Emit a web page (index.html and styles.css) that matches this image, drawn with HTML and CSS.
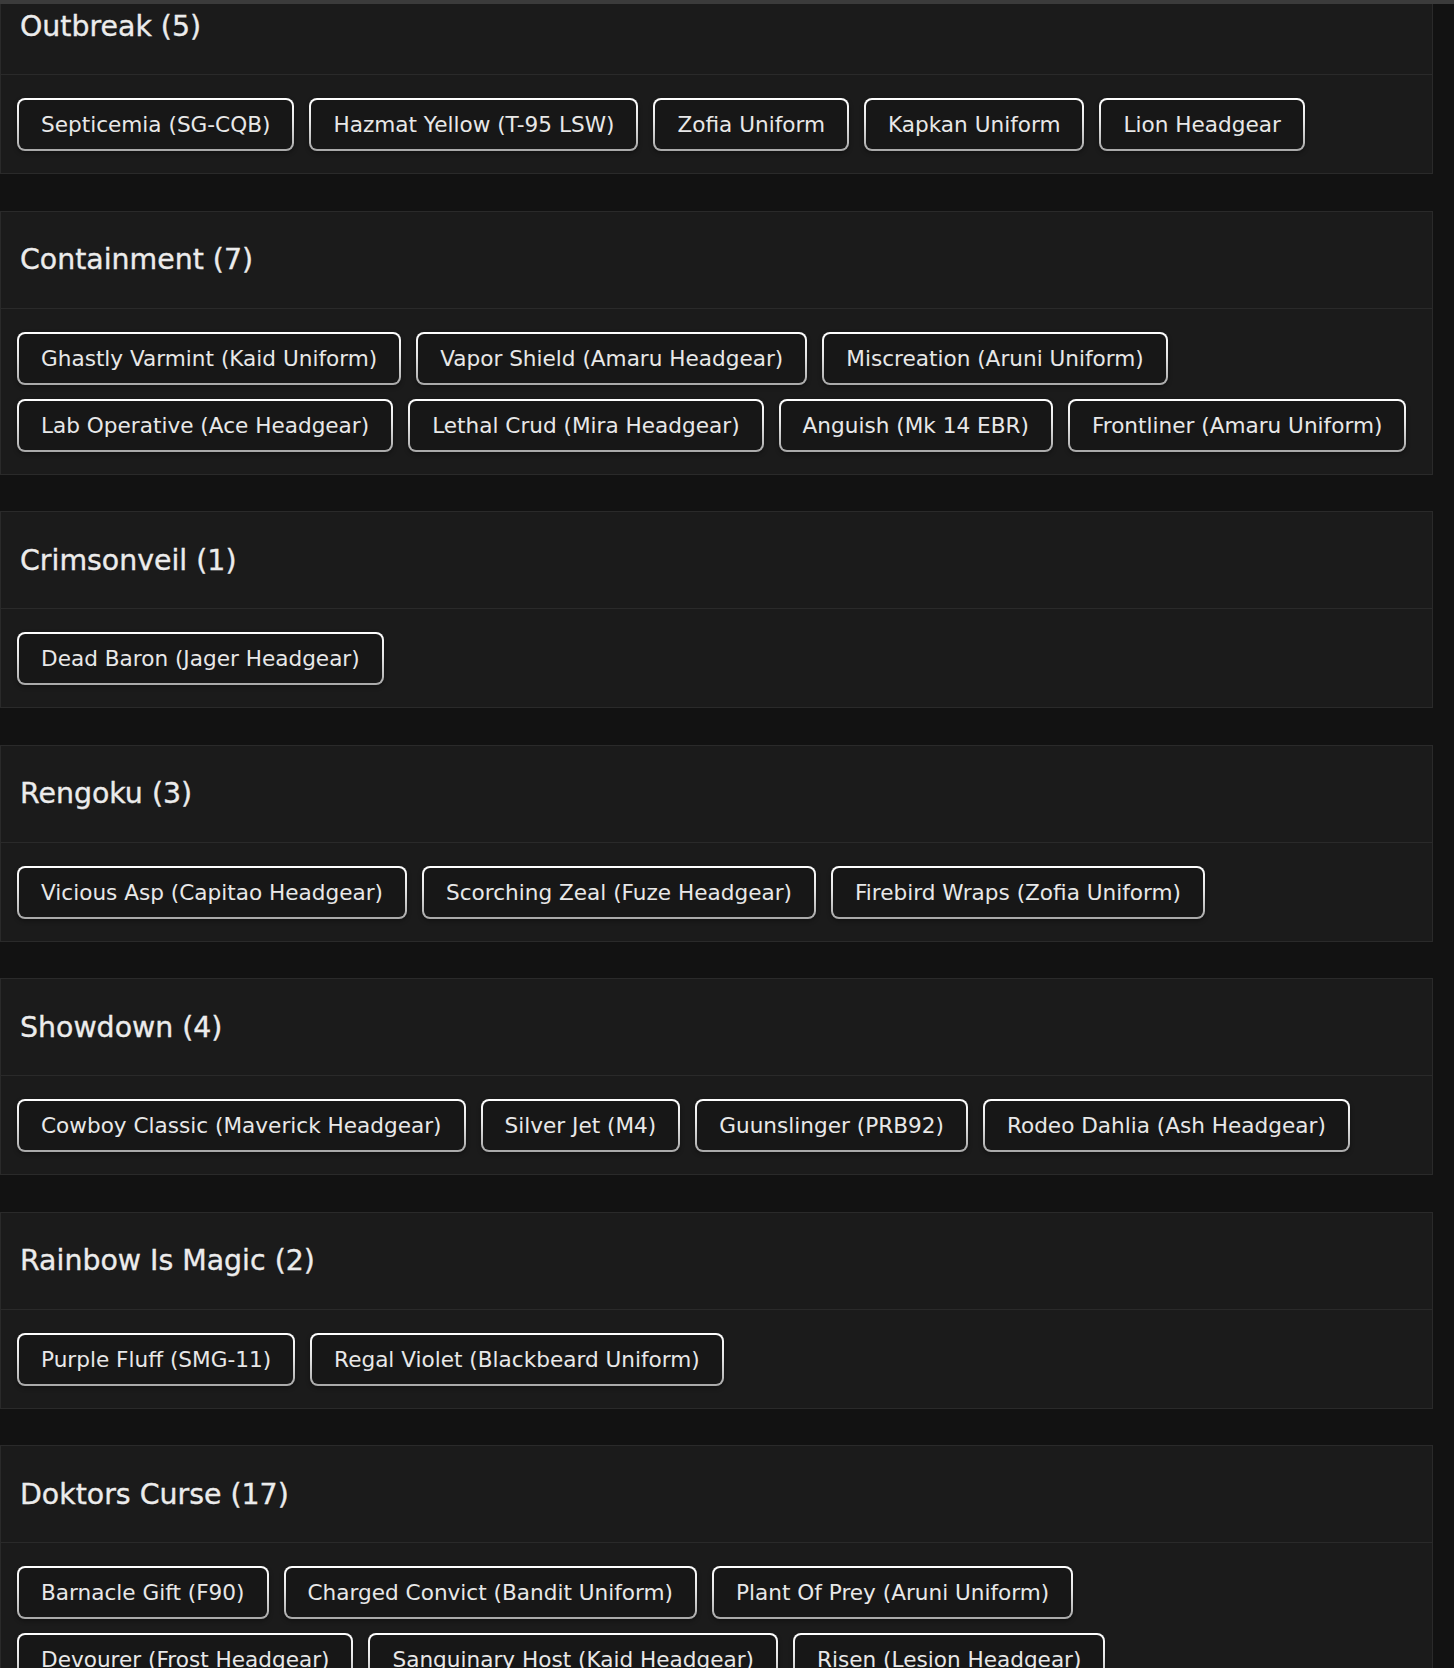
FILE: index.html
```html
<!DOCTYPE html>
<html lang="en">
<head>
<meta charset="utf-8">
<title>Event Collections</title>
<link rel="stylesheet" href="styles.css">
</head>
<body>
<div class="topbar"></div>
<main class="list">
  <section class="card">
    <h2 class="card-head">Outbreak (5)</h2>
    <div class="card-body">
      <span class="chip">Septicemia (SG-CQB)</span>
      <span class="chip">Hazmat Yellow (T-95 LSW)</span>
      <span class="chip">Zofia Uniform</span>
      <span class="chip">Kapkan Uniform</span>
      <span class="chip">Lion Headgear</span>
    </div>
  </section>
  <section class="card">
    <h2 class="card-head">Containment (7)</h2>
    <div class="card-body">
      <span class="chip">Ghastly Varmint (Kaid Uniform)</span>
      <span class="chip">Vapor Shield (Amaru Headgear)</span>
      <span class="chip">Miscreation (Aruni Uniform)</span>
      <span class="chip">Lab Operative (Ace Headgear)</span>
      <span class="chip">Lethal Crud (Mira Headgear)</span>
      <span class="chip">Anguish (Mk 14 EBR)</span>
      <span class="chip">Frontliner (Amaru Uniform)</span>
    </div>
  </section>
  <section class="card">
    <h2 class="card-head">Crimsonveil (1)</h2>
    <div class="card-body">
      <span class="chip">Dead Baron (Jager Headgear)</span>
    </div>
  </section>
  <section class="card">
    <h2 class="card-head">Rengoku (3)</h2>
    <div class="card-body">
      <span class="chip">Vicious Asp (Capitao Headgear)</span>
      <span class="chip">Scorching Zeal (Fuze Headgear)</span>
      <span class="chip">Firebird Wraps (Zofia Uniform)</span>
    </div>
  </section>
  <section class="card">
    <h2 class="card-head">Showdown (4)</h2>
    <div class="card-body">
      <span class="chip">Cowboy Classic (Maverick Headgear)</span>
      <span class="chip">Silver Jet (M4)</span>
      <span class="chip">Guunslinger (PRB92)</span>
      <span class="chip">Rodeo Dahlia (Ash Headgear)</span>
    </div>
  </section>
  <section class="card">
    <h2 class="card-head">Rainbow Is Magic (2)</h2>
    <div class="card-body">
      <span class="chip">Purple Fluff (SMG-11)</span>
      <span class="chip">Regal Violet (Blackbeard Uniform)</span>
    </div>
  </section>
  <section class="card">
    <h2 class="card-head">Doktors Curse (17)</h2>
    <div class="card-body">
      <span class="chip">Barnacle Gift (F90)</span>
      <span class="chip">Charged Convict (Bandit Uniform)</span>
      <span class="chip">Plant Of Prey (Aruni Uniform)</span>
      <span class="chip">Devourer (Frost Headgear)</span>
      <span class="chip">Sanguinary Host (Kaid Headgear)</span>
      <span class="chip">Risen (Lesion Headgear)</span>
      <span class="chip">Monstrous Plumage (Ela Headgear)</span>
      <span class="chip">Bone Collector (Doc Uniform)</span>
      <span class="chip">Grim Harvest (Vigil Headgear)</span>
      <span class="chip">Wicked Stitch (Mute Uniform)</span>
      <span class="chip">Hollow Howl (Jackal Headgear)</span>
      <span class="chip">Swamp Thing (Smoke Uniform)</span>
      <span class="chip">Night Terror (Echo Headgear)</span>
      <span class="chip">Feral Fang (Caveira Uniform)</span>
      <span class="chip">Dread Mask (Glaz Headgear)</span>
      <span class="chip">Rotten Core (Thermite Uniform)</span>
      <span class="chip">Gravebound (Maestro Headgear)</span>
    </div>
  </section>
</main>
</body>
</html>
```
FILE: styles.css
```css
html, body {
  margin: 0;
  padding: 0;
  background: #121212;
}

body {
  font-family: "DejaVu Sans", "Liberation Sans", sans-serif;
  color: #e6e6e6;
  overflow: hidden;
}

.topbar {
  position: fixed;
  top: 0;
  left: 0;
  right: 0;
  height: 4px;
  background: #3b3b3b;
  z-index: 5;
}

.list {
  width: 1433px;
  margin-top: -23px;
  display: flex;
  flex-direction: column;
  gap: 36.5px;
}

.card {
  background: #1b1b1b;
  border: 1px solid #2a2a2a;
  box-sizing: border-box;
}

.card-head {
  margin: 0;
  height: 96px;
  display: flex;
  align-items: center;
  padding: 0 19px;
  border-bottom: 1px solid #2a2a2a;
  font-size: 28.4px;
  font-weight: normal;
  color: #ececec;
  -webkit-text-stroke: 0.35px #ececec;
}

.card-body {
  display: flex;
  flex-wrap: wrap;
  row-gap: 14px;
  column-gap: 15px;
  padding: 23px 16px 22px;
}

.chip {
  display: inline-block;
  box-sizing: border-box;
  height: 53px;
  padding: 11px 22px;
  font-size: 21.6px;
  line-height: 27px;
  color: #e8e8e8;
  border: 2px solid transparent;
  border-radius: 8px;
  background:
    linear-gradient(#171717, #171717) padding-box,
    linear-gradient(to bottom, #ffffff 0%, #e6e6e6 45%, #a8a8a8 100%) border-box;
  box-shadow: 0 2px 4px rgba(0, 0, 0, 0.35);
  white-space: nowrap;
}
```
